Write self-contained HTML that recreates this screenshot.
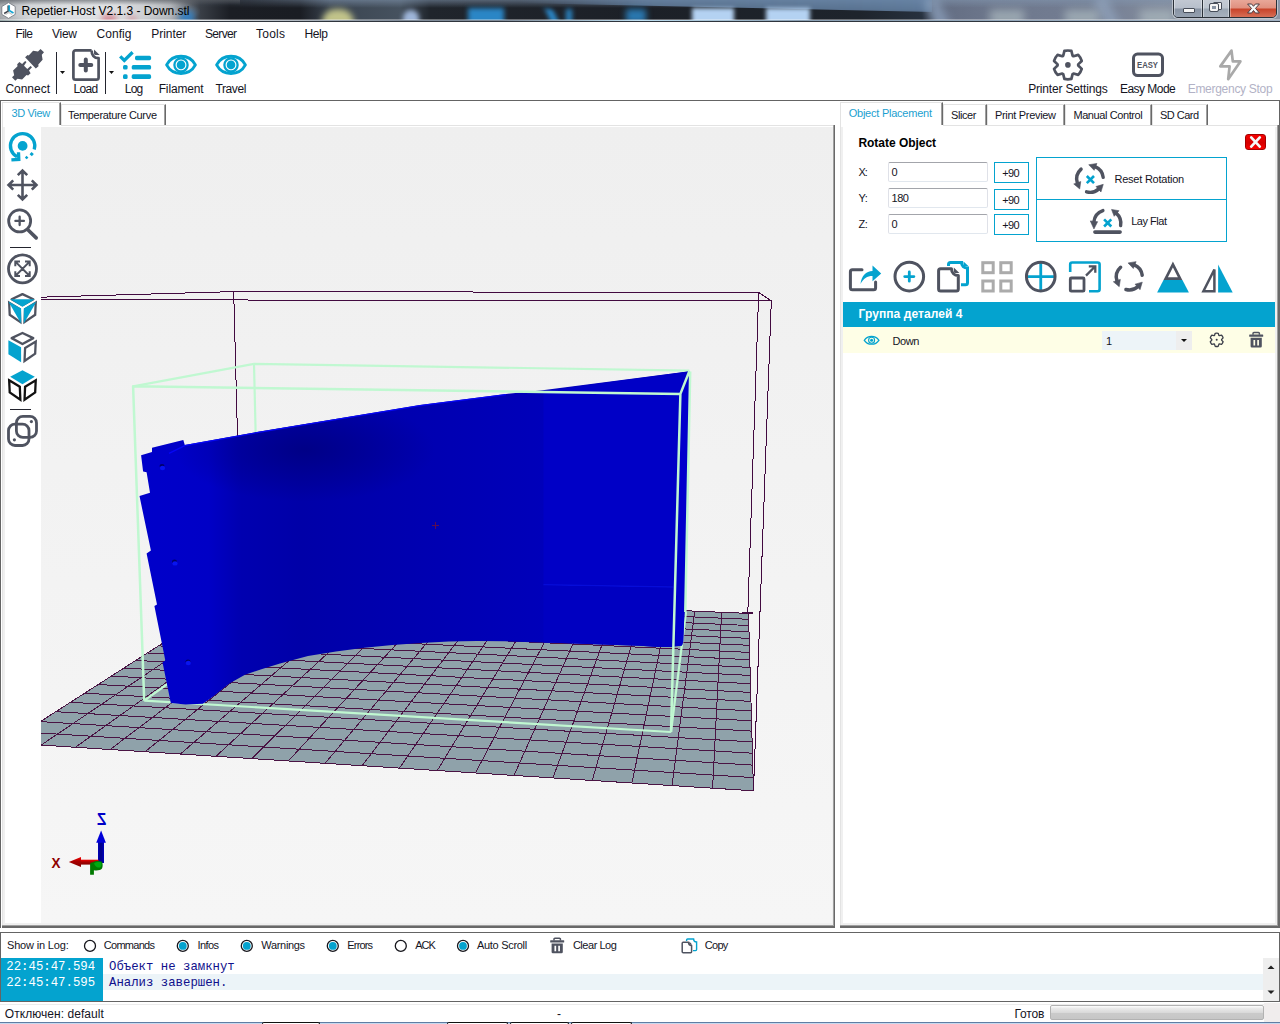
<!DOCTYPE html>
<html>
<head>
<meta charset="utf-8">
<title>Repetier-Host V2.1.3 - Down.stl</title>
<style>
html,body{margin:0;padding:0;}
body{width:1280px;height:1024px;overflow:hidden;background:#fff;position:relative;font-family:"Liberation Sans",sans-serif;font-size:12px;color:#000;}
.abs{position:absolute;}
.t{position:absolute;white-space:nowrap;line-height:14px;}
.ui{font-family:"Liberation Sans",sans-serif;font-size:12px;}
.ms{font-family:"Liberation Sans",sans-serif;font-size:11px;}
.mono{font-family:"Liberation Mono",monospace;font-size:12px;}
#title{left:0;top:0;width:1280px;height:22px;background:#222;}
.hl{position:absolute;height:1px;}
.vl{position:absolute;width:1px;}
svg{position:absolute;overflow:visible;}
.tab{position:absolute;top:104px;height:21px;box-sizing:border-box;border-top:1px solid #e3e3e3;border-left:1px solid #e3e3e3;border-right:1px solid #696969;box-shadow:inset -1px 0 0 #a0a0a0,inset 1px 1px 0 #fff;background:#fff;}
.tabsel{position:absolute;top:102px;height:23px;box-sizing:border-box;border-top:1px solid #e3e3e3;border-left:1px solid #e3e3e3;border-right:1px solid #696969;box-shadow:inset -1px 0 0 #a0a0a0;background:#fff;}
.page{position:absolute;box-sizing:border-box;border-left:1px solid #e3e3e3;border-top:1px solid #e3e3e3;border-right:1px solid #696969;border-bottom:1px solid #696969;box-shadow:inset -1px -1px 0 #a0a0a0, inset 0 0 0 3px #f0f0f0;background:#fff;}
</style>
</head>
<body>
<!-- TITLE BAR -->
<div id="title" class="abs"></div>
<div class="abs" style="left:0;top:0;width:1280px;height:21px;overflow:hidden;background:linear-gradient(90deg,#8e9297 0,#b9bdc2 30px,#c6c9cd 110px,#9fa3a9 170px,#3a3f47 200px,#1b1e24 230px,#1a1d23 300px,#3a4450 330px,#46525f 400px,#20252c 430px,#1c2027 640px,#1e242c 860px,#27313e 922px,#636d82 938px,#6e788d 1000px,#747e93 1100px,#838c9d 1160px,#8d96a6 1280px);">
  <div class="abs" style="left:-10px;top:-6px;width:210px;height:32px;background:radial-gradient(ellipse at 45% 55%,rgba(255,255,255,.55) 0,rgba(255,255,255,.35) 45%,rgba(255,255,255,0) 72%);"></div>
  <div class="abs" style="left:0;top:0;width:1280px;height:8px;background:linear-gradient(180deg,rgba(130,150,175,.55),rgba(130,150,175,0));-webkit-mask-image:linear-gradient(90deg,transparent 180px,#000 330px);mask-image:linear-gradient(90deg,transparent 180px,#000 330px);"></div><div class="abs" style="left:0;top:0;width:240px;height:5px;background:linear-gradient(180deg,rgba(90,94,100,.6),rgba(90,94,100,0));"></div>
  <div class="abs" style="left:520px;top:-6px;width:412px;height:20px;background:linear-gradient(90deg,rgba(105,135,170,0),rgba(105,135,170,.75) 30%,rgba(105,135,170,.85) 100%);clip-path:polygon(0 0,100% 0,100% 90%,0 45%);filter:blur(2.5px);"></div>
  <div class="abs" style="left:102px;top:15px;width:14px;height:8px;background:#d06a78;filter:blur(3px);opacity:.8;"></div>
  <div class="abs" style="left:128px;top:16px;width:8px;height:6px;background:#d06a78;filter:blur(3px);opacity:.6;"></div>
  <div class="abs" style="left:180px;top:11px;width:14px;height:12px;background:#2d80c8;filter:blur(3px);opacity:.9;"></div>
  <div class="abs" style="left:322px;top:9px;width:32px;height:16px;border-radius:14px 14px 0 0;background:#c2c48a;filter:blur(3px);"></div>
  <div class="abs" style="left:403px;top:10px;width:16px;height:14px;border-radius:8px 8px 0 0;background:#9fb6da;filter:blur(2.5px);"></div>
  <div class="abs" style="left:468px;top:8px;width:36px;height:16px;background:#2a86c6;filter:blur(2.5px);"></div>
  <div class="abs" style="left:548px;top:9px;width:8px;height:14px;background:#2a86c6;filter:blur(2.5px);transform:skewX(25deg);"></div>
  <div class="abs" style="left:566px;top:9px;width:6px;height:14px;background:#2a86c6;filter:blur(2.5px);"></div>
  <div class="abs" style="left:626px;top:9px;width:20px;height:14px;background:#2a78b0;filter:blur(3px);"></div>
  <div class="abs" style="left:692px;top:8px;width:42px;height:16px;background:#b4d2f2;filter:blur(2px);"></div>
  <div class="abs" style="left:766px;top:8px;width:44px;height:16px;background:#b4d2f2;filter:blur(2px);"></div>
  <div class="abs" style="left:930px;top:-4px;width:14px;height:34px;background:#8ea3bf;filter:blur(4px);transform:rotate(-28deg);opacity:.7;"></div>
  <div class="abs" style="left:1100px;top:-4px;width:14px;height:34px;background:#93a6bf;filter:blur(4px);transform:rotate(-28deg);opacity:.7;"></div>
  <div class="abs" style="left:990px;top:10px;width:34px;height:14px;background:#a9b7bd;filter:blur(4px);opacity:.75;"></div>
  <div class="abs" style="left:1065px;top:10px;width:34px;height:14px;background:#a9b7bd;filter:blur(4px);opacity:.75;"></div>
  <div class="abs" style="left:1140px;top:10px;width:34px;height:14px;background:#a9b7bd;filter:blur(4px);opacity:.75;"></div>
  <div class="abs" style="left:0;top:19px;width:1280px;height:1px;background:rgba(255,255,255,.35);"></div>
  <div class="abs" style="left:0;top:20px;width:1280px;height:1px;background:linear-gradient(90deg,#9aa 0,#dfe3e6 40px,#dfe3e6 200px,#7f8b99 400px,#7f8b99 500px,#bfe0f2 640px,#8aa0b4 800px,#9fb0c2 1280px);"></div>
  <!-- window buttons -->
  <div class="abs" style="left:1173px;top:-2px;width:104px;height:20px;border:1px solid #2a3038;border-radius:0 0 5px 5px;box-sizing:border-box;box-shadow:0 0 0 1px rgba(255,255,255,.45);overflow:hidden;">
    <div class="abs" style="left:0;top:0;width:28px;height:19px;background:linear-gradient(180deg,#c3c9d3 0,#b7bfcb 9px,#8893a3 10px,#97a2b1 19px);box-shadow:inset 0 0 0 1px rgba(255,255,255,.4);"></div>
    <div class="abs" style="left:28px;top:0;width:1px;height:19px;background:#2a3038;"></div>
    <div class="abs" style="left:29px;top:0;width:26px;height:19px;background:linear-gradient(180deg,#c6ccd5 0,#bcc4ce 9px,#9aa5b2 10px,#a9b3bf 19px);box-shadow:inset 0 0 0 1px rgba(255,255,255,.4);"></div>
    <div class="abs" style="left:55px;top:0;width:1px;height:19px;background:#2a3038;"></div>
    <div class="abs" style="left:56px;top:0;width:47px;height:19px;background:linear-gradient(180deg,#e9aa9c 0,#e0907f 9px,#c8432a 10px,#d9735a 19px);box-shadow:inset 0 0 0 1px rgba(255,255,255,.35);"></div>
    <div class="abs" style="left:9px;top:9px;width:10px;height:3px;background:#f4f4f4;border:1px solid #474d59;border-radius:1px;"></div>
    <div class="abs" style="left:39px;top:3px;width:7px;height:6px;background:#f4f4f4;border:1px solid #474d59;border-radius:1px;"></div>
    <div class="abs" style="left:36px;top:5px;width:4px;height:3px;background:#8893a3;border:2px solid #f4f4f4;outline:1px solid #474d59;border-radius:1px;"></div>
    <svg style="left:73px;top:4px" width="13" height="11" viewBox="0 0 13 11"><path d="M0.600 1h4l1.900 2.300L8.400 1h4L8.500 5.400 12.400 10h-4L6.500 7.500 4.600 10h-4l3.900-4.600z" fill="#f7f7f7" stroke="#4a3a40" stroke-width="1" stroke-linejoin="round"/></svg>
  </div>
  <!-- app icon -->
  <svg style="left:1px;top:2px" width="15" height="17" viewBox="0 0 15 17"><path d="M7.5 0.6L14.2 4.5V12.4L7.5 16.4L0.8 12.4V4.5z" fill="#fff" stroke="#6a6f77" stroke-width="0.8"/><path d="M7.2 3.5v5.6l-4 2.4" stroke="#3f434d" stroke-width="1.6" fill="none"/><path d="M8.2 3.2v5.2l4.3 2.6" stroke="#16a5d2" stroke-width="1.7" fill="none"/><path d="M4.5 12.5l3.3-2 3.3 2" stroke="#c8c8c8" stroke-width="1.3" fill="none"/></svg>
  <span class="t" style="left:21.5px;top:4px;letter-spacing:-0.024px;font-family:'Liberation Sans',sans-serif;font-size:12px;">Repetier-Host V2.1.3 - Down.stl</span>
</div>
<div class="abs" style="left:0;top:21px;width:1280px;height:1px;background:#2f353d;"></div>


<!-- MENU -->
<span class="t" style="left:15.5px;top:27px;letter-spacing:-0.615px;font-family:'Liberation Sans',sans-serif;font-size:12px;color:#14141e;">File</span>
<span class="t" style="left:52px;top:27px;letter-spacing:-0.266px;font-family:'Liberation Sans',sans-serif;font-size:12px;color:#14141e;">View</span>
<span class="t" style="left:96.5px;top:27px;letter-spacing:0.062px;font-family:'Liberation Sans',sans-serif;font-size:12px;color:#14141e;">Config</span>
<span class="t" style="left:151.3px;top:27px;letter-spacing:-0.057px;font-family:'Liberation Sans',sans-serif;font-size:12px;color:#14141e;">Printer</span>
<span class="t" style="left:205px;top:27px;letter-spacing:-0.669px;font-family:'Liberation Sans',sans-serif;font-size:12px;color:#14141e;">Server</span>
<span class="t" style="left:256px;top:27px;letter-spacing:0.246px;font-family:'Liberation Sans',sans-serif;font-size:12px;color:#14141e;">Tools</span>
<span class="t" style="left:304.4px;top:27px;letter-spacing:-0.396px;font-family:'Liberation Sans',sans-serif;font-size:12px;color:#14141e;">Help</span>


<!-- TOOLBAR -->
<!-- connect -->
<svg style="left:12px;top:49px" width="32" height="32" viewBox="0 0 32 32"><g fill="#4f5360">
<path d="M13.1 8.2L15.6 6L16.7 6.6L21.1 1.7L26 2.5L28.5 0L32 3.3L29.8 5.7L30.6 10.7L26.3 15.6L26.5 17.2L23.8 19.4Z"/>
<path d="M5.2 15.3L7.4 13.1L10.1 15L13.1 12L14.5 13.1L12 16.7L15.3 20L18.6 17L20 18.3L17 21.6L18.6 24.3L16.1 26.5L14.5 26L10.1 30.6L5.5 29.8L3.3 31.7L0 28.2L2.2 26.3L1.1 21.6L5.5 17.2Z"/>
</g></svg>
<span class="t" style="left:5.4px;top:82px;letter-spacing:-0.017px;font-family:'Liberation Sans',sans-serif;font-size:12px;color:#14141e;">Connect</span>
<div class="abs" style="left:56px;top:52px;width:1px;height:42px;background:#23242e;"></div>
<svg style="left:60px;top:71px" width="5" height="3" viewBox="0 0 5 3"><path d="M0 0h5L2.5 3z" fill="#111"/></svg>
<!-- load -->
<svg style="left:72px;top:49px" width="28" height="32" viewBox="0 0 28 32"><g fill="none" stroke="#4f5360" stroke-width="2.7" stroke-linejoin="round">
<path d="M19.6 1.4H3.6A2.2 2.2 0 0 0 1.4 3.6V28.4A2.2 2.2 0 0 0 3.6 30.6H24.4A2.2 2.2 0 0 0 26.6 28.4V9.2C22 9.2 19.6 6 19.6 1.4"/>
</g><path d="M22 0.5L27.7 6H23.6A1.6 1.6 0 0 1 22 4.4z" fill="#4f5360"/>
<path d="M13.8 10.6V21.6M8.3 16.1H19.3" stroke="#4f5360" stroke-width="4" stroke-linecap="round" fill="none"/></svg>
<span class="t" style="left:73.6px;top:82px;letter-spacing:-0.701px;font-family:'Liberation Sans',sans-serif;font-size:12px;color:#14141e;">Load</span>
<div class="abs" style="left:105px;top:52px;width:1px;height:42px;background:#23242e;"></div>
<svg style="left:109px;top:71px" width="5" height="3" viewBox="0 0 5 3"><path d="M0 0h5L2.5 3z" fill="#111"/></svg>
<!-- log -->
<svg style="left:0;top:0" width="1280" height="100" viewBox="0 0 1280 100"><g fill="#04a3cf">
<path d="M120.2 56.4L124.3 60.4L132.6 52.3" fill="none" stroke="#04a3cf" stroke-width="3.3"/>
<rect x="135" y="55.8" width="16.1" height="4.4" rx="1.6"/>
<rect x="123" y="65.1" width="4.6" height="4.5" rx="1.5"/><rect x="131.7" y="65.1" width="19.4" height="4.5" rx="1.6"/>
<rect x="123" y="74.3" width="4.6" height="4.6" rx="1.5"/><rect x="131.7" y="74.3" width="19.4" height="4.6" rx="1.6"/>
</g>
<!-- eyes -->
<g id="eye" fill="none" stroke="#04a3cf"><path d="M166.6 64.9C170 58.5 175.5 56.3 181 56.3C186.500 56.3 192 58.5 195.4 64.9C192 71.300 186.500 73.500 181 73.500C175.500 73.500 170 71.300 166.600 64.900Z" stroke-width="2.9" stroke-linejoin="round"/><circle cx="181" cy="64.9" r="6.6" stroke-width="2.3"/><circle cx="181" cy="64.9" r="4.3" fill="#04a3cf" stroke="none"/></g>
<use href="#eye" x="50"/>
<!-- gear -->
<path d="M1072.58 55.72L1071.38 50.93A14.4 14.4 0 0 0 1064.42 50.93L1063.22 55.72A10.3 10.3 0 0 0 1062.29 56.26L1057.54 54.90A14.4 14.4 0 0 0 1054.06 60.93L1057.61 64.36A10.3 10.3 0 0 0 1057.61 65.44L1054.06 68.87A14.4 14.4 0 0 0 1057.54 74.90L1062.29 73.54A10.3 10.3 0 0 0 1063.22 74.08L1064.42 78.87A14.4 14.4 0 0 0 1071.38 78.87L1072.58 74.08A10.3 10.3 0 0 0 1073.51 73.54L1078.26 74.90A14.4 14.4 0 0 0 1081.74 68.87L1078.19 65.44A10.3 10.3 0 0 0 1078.19 64.36L1081.74 60.93A14.4 14.4 0 0 0 1078.26 54.90L1073.51 56.26A10.3 10.3 0 0 0 1072.58 55.72Z" fill="none" stroke="#4f5360" stroke-width="2.7" stroke-linejoin="round"/><circle cx="1067.9" cy="64.9" r="2.8" fill="#4f5360"/>
<!-- easy -->
<rect x="1133.5" y="54.1" width="29" height="21.4" rx="4" fill="none" stroke="#4f5360" stroke-width="3"/>
<text x="1137" y="67.7" font-family="Liberation Sans, sans-serif" font-size="8.6" font-weight="bold" fill="#4f5360" textLength="21" lengthAdjust="spacingAndGlyphs">EASY</text>
<!-- bolt -->
<path d="M1231.5 50.6L1220.3 66.4H1229.6L1228.2 79.2L1240.4 61.4H1232.8Z" fill="none" stroke="#a9a9a9" stroke-width="2.7" stroke-linejoin="round"/>
</svg>
<span class="t" style="left:124.7px;top:82px;letter-spacing:-0.716px;font-family:'Liberation Sans',sans-serif;font-size:12px;color:#14141e;">Log</span>
<span class="t" style="left:158.7px;top:82px;letter-spacing:-0.145px;font-family:'Liberation Sans',sans-serif;font-size:12px;color:#14141e;">Filament</span>
<span class="t" style="left:215.4px;top:82px;letter-spacing:-0.381px;font-family:'Liberation Sans',sans-serif;font-size:12px;color:#14141e;">Travel</span>
<span class="t" style="left:1028.2px;top:82px;letter-spacing:-0.170px;font-family:'Liberation Sans',sans-serif;font-size:12px;color:#14141e;">Printer Settings</span>
<span class="t" style="left:1120px;top:82px;letter-spacing:-0.541px;font-family:'Liberation Sans',sans-serif;font-size:12px;color:#14141e;">Easy Mode</span>
<span class="t" style="left:1187.7px;top:82px;letter-spacing:-0.286px;font-family:'Liberation Sans',sans-serif;font-size:12px;color:#b2b2c6;">Emergency Stop</span>


<!-- FRAMES -->
<div class="abs" style="left:0;top:100px;width:1280px;height:1px;background:#646464;"></div>
<div class="abs" style="left:0;top:100px;width:1px;height:828px;background:#646464;"></div>
<div class="abs" style="left:1279px;top:100px;width:1px;height:26px;background:#646464;"></div>
<!-- left tab control -->
<div class="abs" style="left:2px;top:125px;width:833px;height:803px;background:#696969;"></div>
<div class="abs" style="left:2px;top:125px;width:832px;height:801px;background:#a0a0a0;"></div>
<div class="abs" style="left:2px;top:125px;width:831px;height:800px;background:#e3e3e3;"></div>
<div class="abs" style="left:3px;top:126px;width:830px;height:799px;background:#f0f0f0;"></div>
<div class="abs" style="left:3px;top:125px;width:830px;height:2px;background:#fff;"></div><div class="abs" style="left:61px;top:125px;width:772px;height:1px;background:#e3e3e3;"></div>
<div class="abs" style="left:5px;top:127px;width:36px;height:796px;background:#fff;"></div>
<div class="tab" style="left:61px;width:105px;"></div>
<div class="tabsel" style="left:2px;width:59px;"></div><div class="abs" style="left:3px;top:125px;width:57px;height:2px;background:#fff;"></div>
<span class="t" style="left:11.5px;top:106px;letter-spacing:-0.361px;font-family:'Liberation Sans',sans-serif;font-size:11px;color:#1b9fd0;">3D View</span>
<span class="t" style="left:68px;top:108px;letter-spacing:-0.322px;font-family:'Liberation Sans',sans-serif;font-size:11px;color:#14141e;">Temperature Curve</span>
<!-- right tab control -->
<div class="abs" style="left:840px;top:125px;width:440px;height:803px;background:#696969;"></div>
<div class="abs" style="left:840px;top:125px;width:438px;height:801px;background:#a0a0a0;"></div>
<div class="abs" style="left:840px;top:125px;width:437px;height:800px;background:#e3e3e3;"></div>
<div class="abs" style="left:841px;top:126px;width:436px;height:799px;background:#f0f0f0;"></div>
<div class="abs" style="left:841px;top:125px;width:436px;height:2px;background:#fff;"></div><div class="abs" style="left:943px;top:125px;width:334px;height:1px;background:#e3e3e3;"></div>
<div class="abs" style="left:843px;top:127px;width:432px;height:796px;background:#fff;"></div>
<div class="tab" style="left:943px;width:44px;"></div>
<div class="tab" style="left:987px;width:78px;"></div>
<div class="tab" style="left:1065px;width:87px;"></div>
<div class="tab" style="left:1152px;width:56px;"></div>
<div class="tabsel" style="left:840px;width:103px;"></div><div class="abs" style="left:841px;top:125px;width:101px;height:2px;background:#fff;"></div>
<span class="t" style="left:848.7px;top:106px;letter-spacing:-0.235px;font-family:'Liberation Sans',sans-serif;font-size:11px;color:#1b9fd0;">Object Placement</span>
<span class="t" style="left:951px;top:108px;letter-spacing:-0.423px;font-family:'Liberation Sans',sans-serif;font-size:11px;color:#14141e;">Slicer</span>
<span class="t" style="left:995px;top:108px;letter-spacing:-0.316px;font-family:'Liberation Sans',sans-serif;font-size:11px;color:#14141e;">Print Preview</span>
<span class="t" style="left:1073.4px;top:108px;letter-spacing:-0.400px;font-family:'Liberation Sans',sans-serif;font-size:11px;color:#14141e;">Manual Control</span>
<span class="t" style="left:1160px;top:108px;letter-spacing:-0.531px;font-family:'Liberation Sans',sans-serif;font-size:11px;color:#14141e;">SD Card</span>


<!-- LEFT TOOLS -->
<svg style="left:0;top:0" width="45" height="460" viewBox="0 0 45 460">
<g fill="none" stroke="#04a3cf" stroke-width="3.3"><path d="M34.20 149.57A12.2 12.2 0 1 0 17.06 156.67"/><path d="M18.5 152.2L18.8 159.4L11.4 159.8" stroke-linejoin="miter"/></g>
<circle cx="22.6" cy="145.9" r="4.9" fill="#04a3cf"/>
<rect x="30.2" y="152.6" width="3" height="3" fill="#04a3cf" transform="rotate(40 31.7 154.1)"/><rect x="25.4" y="156.4" width="2.5" height="2.5" fill="#04a3cf" transform="rotate(40 26.7 157.6)"/>
<g fill="none" stroke="#4f5360" stroke-width="2.6" stroke-linejoin="miter">
<path d="M22.5 170.5V199.5M8.5 185H36.500M17.800 175.200L22.500 170.500L27.200 175.200M17.800 194.800L22.500 199.500L27.200 194.800M13.200 180.300L8.500 185L13.200 189.700M31.800 180.300L36.500 185L31.800 189.700"/>
</g>
<g fill="none" stroke="#4f5360">
<circle cx="19.65" cy="220.9" r="11" stroke-width="2.8"/><path d="M15.4 220.900H23.900M19.650 216.700V225.100" stroke-width="2.3" stroke-linecap="round"/><path d="M27.600 229.500L36.200 237.900" stroke-width="3.600" stroke-linecap="round"/>
<circle cx="22.500" cy="268.800" r="14" stroke-width="2.800"/>
<path d="M15.600 261.900L29.400 275.700M29.400 261.900L15.600 275.700M15.300 266.300V261.600H20M25 261.600H29.700V266.300M29.700 271.300V276H25M20 276H15.300V271.300" stroke-width="2"/>
</g>
<rect x="10" y="247" width="21" height="1" fill="#23242e"/>
<rect x="10" y="409" width="21" height="1" fill="#23242e"/>
<polygon points="22.46,294.09 33.31,299.23 22.46,305.21 11.64,299.23" fill="none" stroke="#4f5360" stroke-width="2.3" stroke-linejoin="round"/><polygon points="10.15,299.20 34.80,299.20 22.46,306.70" fill="#04a3cf"/><polygon points="9.16,302.69 19.81,309.16 20.36,322.10 9.73,314.76" fill="none" stroke="#4f5360" stroke-width="2.3"/><polygon points="25.09,309.16 35.74,302.69 35.17,314.76 24.54,322.10" fill="none" stroke="#4f5360" stroke-width="2.3"/><polygon points="8.40,301.40 21.10,308.40 21.10,323.40" fill="#04a3cf"/><polygon points="23.80,308.40 36.50,301.40 23.80,323.40" fill="#04a3cf"/><polygon points="22.46,332.99 33.31,338.13 22.46,344.11 11.64,338.13" fill="none" stroke="#4f5360" stroke-width="2.3" stroke-linejoin="round"/><polygon points="8.40,340.30 21.10,347.30 21.10,362.30 8.40,354.35" fill="#04a3cf"/><polygon points="25.09,348.06 35.74,341.59 35.17,353.66 24.54,361.00" fill="none" stroke="#4f5360" stroke-width="2.3"/><polygon points="22.46,370.20 34.80,376.80 22.46,384.30 10.15,376.80" fill="#04a3cf"/><polygon points="9.16,380.29 19.81,386.76 20.36,399.70 9.73,392.36" fill="none" stroke="#111" stroke-width="2.3"/><polygon points="25.09,386.76 35.74,380.29 35.17,392.36 24.54,399.70" fill="none" stroke="#111" stroke-width="2.3"/>
<g fill="none" stroke="#4f5360" stroke-width="2.8"><rect x="16.400" y="416.400" width="20.100" height="21" rx="6.500"/><rect x="8.500" y="424.100" width="20.500" height="21.400" rx="6.500"/></g>
<circle cx="31.400" cy="421.600" r="1.600" fill="#4f5360"/><circle cx="14.400" cy="439.800" r="1.600" fill="#4f5360"/>
</svg>


<!-- 3D VIEW -->
<svg class="abs" style="left:41px;top:127px;" width="791" height="796" viewBox="41 127 791 796">
<defs>
<linearGradient id="bgv" x1="0" y1="0" x2="0" y2="1"><stop offset="0" stop-color="#efefef"/><stop offset="1" stop-color="#f6f6f6"/></linearGradient>
<linearGradient id="objg" gradientUnits="userSpaceOnUse" x1="140" y1="0" x2="545" y2="0">
<stop offset="0" stop-color="#0000ca"/><stop offset="0.17" stop-color="#0000c6"/><stop offset="0.25" stop-color="#0000b0"/><stop offset="0.4" stop-color="#0000a8"/><stop offset="0.6" stop-color="#0000ae"/><stop offset="0.8" stop-color="#0000b4"/><stop offset="1" stop-color="#0000ba"/></linearGradient>
<radialGradient id="objd" gradientUnits="userSpaceOnUse" cx="305" cy="450" r="130" gradientTransform="translate(305 450) scale(1 0.4) translate(-305 -450)"><stop offset="0" stop-color="#000070" stop-opacity="0.6"/><stop offset="1" stop-color="#000070" stop-opacity="0"/></radialGradient>
<clipPath id="objc"><polygon points="141.1,455.2 152.0,452.0 152.0,447.8 183.3,440.0 184.8,445.0 260.0,431.5 340.0,418.2 420.0,405.0 506.0,394.0 540.6,390.4 689.6,371.2 690.4,373.5 686.7,536.0 684.6,609.0 683.2,641.5 682.0,645.6 671.5,647.0 658.7,647.0 640.0,645.8 617.5,645.0 589.0,644.0 561.0,643.0 533.0,642.2 505.0,641.3 476.9,641.0 448.7,641.6 420.6,643.0 392.5,645.0 364.4,647.8 336.0,651.5 308.0,656.0 280.0,663.6 260.6,669.4 245.0,674.8 229.4,683.4 213.8,696.0 202.8,703.8 185.6,704.5 170.8,703.0 162.5,662.3 165.3,660.5 154.4,606.0 157.0,604.5 146.6,553.6 150.9,550.5 139.5,496.1 150.0,492.7 146.6,472.3 143.1,471.6"/></clipPath>
<clipPath id="vclip"><rect x="41" y="127" width="791" height="796"/></clipPath>
</defs>
<rect x="41" y="127" width="791" height="796" fill="url(#bgv)"/>
<g clip-path="url(#vclip)">
<!-- printer volume back lines -->
<g stroke="#420a40" stroke-width="1" fill="none" shape-rendering="crispEdges">
<path d="M233.7 291.6L237.6 440M233.7 291.6L758.7 292.5M233.7 291.6L30 297.5M758.7 292.5L747.8 613"/>
</g>
<!-- bbox back lines -->
<g stroke="#c0f8d1" stroke-width="2.2" fill="none">
<path d="M254 363.8L255.8 440M254 363.8L689.4 370.6M133.1 386.3L254 363.8"/>
</g>
<!-- bed -->
<polygon points="7.1,742.9 753.5,790.8 748.5,613.4 242.4,592.1" fill="#8fa2aa"/>
<path d="M7.1 742.9L242.4 592.1M7.1 742.9L753.5 790.8M41.1 745.1L266.2 593.1M24.0 732.0L753.1 777.6M75.4 747.3L290.1 594.1M40.2 721.6L752.8 765.1M110.1 749.5L314.2 595.1M55.7 711.7L752.4 753.2M145.1 751.7L338.5 596.1M70.5 702.3L752.1 741.9M180.4 754.0L362.9 597.1M84.6 693.2L751.8 731.1M216.0 756.3L387.4 598.2M98.2 684.5L751.5 720.8M252.0 758.6L412.1 599.2M111.2 676.1L751.2 710.9M288.4 760.9L437.0 600.3M123.7 668.1L751.0 701.4M325.1 763.3L462.0 601.3M135.7 660.4L750.7 692.4M362.1 765.7L487.2 602.4M147.3 653.0L750.5 683.7M399.5 768.1L512.6 603.5M158.4 645.9L750.2 675.4M437.3 770.5L538.1 604.5M169.1 639.0L750.0 667.4M475.5 772.9L563.8 605.6M179.5 632.4L749.8 659.7M514.0 775.4L589.7 606.7M189.4 626.0L749.6 652.4M552.9 777.9L615.7 607.8M199.0 619.9L749.4 645.3M592.2 780.4L641.9 608.9M208.3 613.9L749.2 638.4M631.9 783.0L668.3 610.0M217.3 608.2L749.0 631.8M672.0 785.6L694.8 611.1M225.9 602.6L748.8 625.5M712.6 788.2L721.6 612.3M234.3 597.3L748.7 619.3M753.5 790.8L748.5 613.4M242.4 592.1L748.5 613.4" stroke="#4a1444" stroke-width="1" fill="none" shape-rendering="crispEdges"/>
<path d="M686 612L671 732M144.2 700.6L180 675M144.2 700.6L671 732" stroke="#c0f8d1" stroke-width="2.2" fill="none"/>
<!-- object -->
<polygon points="141.1,455.2 152.0,452.0 152.0,447.8 183.3,440.0 184.8,445.0 260.0,431.5 340.0,418.2 420.0,405.0 506.0,394.0 540.6,390.4 689.6,371.2 690.4,373.5 686.7,536.0 684.6,609.0 683.2,641.5 682.0,645.6 671.5,647.0 658.7,647.0 640.0,645.8 617.5,645.0 589.0,644.0 561.0,643.0 533.0,642.2 505.0,641.3 476.9,641.0 448.7,641.6 420.6,643.0 392.5,645.0 364.4,647.8 336.0,651.5 308.0,656.0 280.0,663.6 260.6,669.4 245.0,674.8 229.4,683.4 213.8,696.0 202.8,703.8 185.6,704.5 170.8,703.0 162.5,662.3 165.3,660.5 154.4,606.0 157.0,604.5 146.6,553.6 150.9,550.5 139.5,496.1 150.0,492.7 146.6,472.3 143.1,471.6" fill="url(#objg)"/>
<g clip-path="url(#objc)">
<rect x="140" y="360" width="560" height="350" fill="url(#objd)"/>
<polygon points="543.5,391 690,371 692,374 690,500 687,600 686,586 543.5,584" fill="#0000c6"/>
<polygon points="543.5,584 686,586.5 686,588 543.5,585.5" fill="#0a14ee" opacity="0.6"/>
<polygon points="680.4,393.9 689.5,371.5 692,374 690,500 687,600 685,646 676,646 672.8,600" fill="#0000cc"/>
<polygon points="543.5,585.5 673.4,588 672,650 543.5,650" fill="#0000c1"/>
</g>
<path d="M169 453.4L184.8 445.600L260 432.100L340 418.800L420 405.600L506 394.600" stroke="#0606f6" stroke-width="1.3" fill="none"/>
<!-- holes -->
<g fill="#00006a"><ellipse cx="162" cy="466" rx="2.5" ry="2"/><ellipse cx="174.5" cy="561.5" rx="2.5" ry="2"/><ellipse cx="188" cy="661.5" rx="2.5" ry="2"/></g>
<g fill="#0814f0"><ellipse cx="162.5" cy="468" rx="2.6" ry="2.2"/><ellipse cx="175" cy="563.4" rx="2.6" ry="2.2"/><ellipse cx="188.3" cy="663" rx="2.6" ry="2.2"/></g>
<!-- bbox front lines -->
<g stroke="#c0f8d1" stroke-width="2.5" fill="none" stroke-linejoin="round">
<path d="M144.2 700.6L133.1 386.3L680.4 393.9L671 732M680.4 393.9L689.4 371M690.200 371.500L685.300 612"/>
</g>
<!-- printer volume front lines -->
<g stroke="#420a40" stroke-width="1" fill="none" shape-rendering="crispEdges">
<path d="M30 299.6L771.3 301L753.5 790.8M758.7 292.5L771.3 301"/>
<path d="M741.5 612.8H752.5" stroke-width="2"/>
<path d="M432 525H439M435.5 521.500V528.500" stroke="#5c0c50"/>
</g>
<!-- axis gizmo -->
<g>
<linearGradient id="zb" x1="0" x2="1"><stop offset="0" stop-color="#0000b8"/><stop offset=".5" stop-color="#000086"/><stop offset="1" stop-color="#0000c0"/></linearGradient>
<linearGradient id="xr" x1="0" x2="0" y1="0" y2="1"><stop offset="0" stop-color="#f40000"/><stop offset=".45" stop-color="#a80000"/><stop offset="1" stop-color="#860000"/></linearGradient>
<rect x="98" y="842" width="6" height="21" fill="url(#zb)"/><polygon points="101.100,830.500 96.200,842.800 105.900,842.800" fill="#0000d8"/>
<rect x="80.500" y="859.700" width="18" height="4.900" fill="url(#xr)"/><polygon points="68.800,862.100 81,857 81,867" fill="url(#xr)"/>
<path d="M90.100 874.700V864.500C90.100 863 91.500 862.200 93 862.300C94.500 860.800 99 860.600 101.500 861.500C103 862.500 103 866.500 102 868.500C100.500 870.500 97 870.700 93.900 870.300V874.700Z" fill="#007a00"/>
<path d="M94 863.500C96 862 99.500 861.700 101 862.500C102 864 101.500 866.500 100 867.500C98 868 95.500 867 94 863.500Z" fill="#00aa10"/>
<text x="51.400" y="868" font-family="Liberation Sans, sans-serif" font-size="15.300" font-weight="bold" fill="#8e0000" textLength="9" lengthAdjust="spacingAndGlyphs">X</text>
<text x="-106.200" y="824.600" font-family="Liberation Sans, sans-serif" font-size="16" font-weight="bold" fill="#0000c8" transform="scale(-1 1)" textLength="9.200" lengthAdjust="spacingAndGlyphs">Z</text>
</g>
</g>
</svg>


<!-- RIGHT PANEL -->

<span class="t" style="left:858.4px;top:136px;letter-spacing:-0.026px;font-family:'Liberation Sans',sans-serif;font-size:12px;font-weight:bold;">Rotate Object</span>
<div class="abs" style="left:1245px;top:134px;width:21px;height:16px;box-sizing:border-box;border:1px solid #a30000;border-radius:3px;background:linear-gradient(180deg,#f60000 0,#d40000 55%,#fb0000 100%);"></div>
<svg style="left:1245px;top:134px" width="21" height="16" viewBox="0 0 21 16"><path d="M6.2 3.4L14.800 12.600M14.800 3.400L6.200 12.600" stroke="#f4f8f8" stroke-width="2.700" stroke-linecap="round"/></svg>
<span class="t" style="left:858.4px;top:165px;letter-spacing:-1.006px;font-family:'Liberation Sans',sans-serif;font-size:11px;color:#14141e;">X:</span>
<span class="t" style="left:858.4px;top:191px;letter-spacing:-0.397px;font-family:'Liberation Sans',sans-serif;font-size:11px;color:#14141e;">Y:</span>
<span class="t" style="left:858.4px;top:217px;letter-spacing:-0.381px;font-family:'Liberation Sans',sans-serif;font-size:11px;color:#14141e;">Z:</span>
<div class="abs" style="left:888px;top:162px;width:100px;height:20px;box-sizing:border-box;border:1px solid #dfe1e8;border-top-color:#a3a5ab;border-bottom-color:#e1e7ee;border-radius:2px;background:#fff;"></div><div class="abs" style="left:888px;top:188px;width:100px;height:20px;box-sizing:border-box;border:1px solid #dfe1e8;border-top-color:#a3a5ab;border-bottom-color:#e1e7ee;border-radius:2px;background:#fff;"></div><div class="abs" style="left:888px;top:214px;width:100px;height:20px;box-sizing:border-box;border:1px solid #dfe1e8;border-top-color:#a3a5ab;border-bottom-color:#e1e7ee;border-radius:2px;background:#fff;"></div>
<span class="t" style="left:891.6px;top:165px;font-family:'Liberation Sans',sans-serif;font-size:11px;color:#14141e;">0</span>
<span class="t" style="left:891.6px;top:191px;letter-spacing:-0.580px;font-family:'Liberation Sans',sans-serif;font-size:11px;color:#14141e;">180</span>
<span class="t" style="left:891.6px;top:217px;font-family:'Liberation Sans',sans-serif;font-size:11px;color:#14141e;">0</span>
<div class="abs" style="left:994px;top:162px;width:35px;height:21px;box-sizing:border-box;border:1px solid #04a3cf;background:#fff;"></div><div class="abs" style="left:994px;top:189px;width:35px;height:21px;box-sizing:border-box;border:1px solid #04a3cf;background:#fff;"></div><div class="abs" style="left:994px;top:214px;width:35px;height:21px;box-sizing:border-box;border:1px solid #04a3cf;background:#fff;"></div>
<span class="t" style="left:1002.2px;top:166px;letter-spacing:-0.586px;font-family:'Liberation Sans',sans-serif;font-size:11px;color:#14141e;">+90</span>
<span class="t" style="left:1002.2px;top:193px;letter-spacing:-0.586px;font-family:'Liberation Sans',sans-serif;font-size:11px;color:#14141e;">+90</span>
<span class="t" style="left:1002.2px;top:218px;letter-spacing:-0.586px;font-family:'Liberation Sans',sans-serif;font-size:11px;color:#14141e;">+90</span>
<div class="abs" style="left:1036px;top:157px;width:191px;height:85px;box-sizing:border-box;border:1px solid #04a3cf;background:#fff;"></div>
<div class="abs" style="left:1036px;top:199px;width:191px;height:1px;background:#04a3cf;"></div>
<span class="t" style="left:1114.5px;top:172px;letter-spacing:-0.236px;font-family:'Liberation Sans',sans-serif;font-size:11px;color:#14141e;">Reset Rotation</span>
<span class="t" style="left:1131.2px;top:214px;letter-spacing:-0.477px;font-family:'Liberation Sans',sans-serif;font-size:11px;color:#14141e;">Lay Flat</span>
<svg style="left:0;top:0" width="1280" height="360" viewBox="0 0 1280 360">
<!-- reset rotation icon -->
<path d="M1103.20 177.38A13.3 13.3 0 0 0 1094.98 166.67" fill="none" stroke="#4f5360" stroke-width="3.4" stroke-linecap="round"/><polygon points="1088.75,164.75 1096.91,163.47 1094.13,170.34" fill="#4f5360" stroke="#4f5360" stroke-width="0.6" stroke-linejoin="round"/><path d="M1081.10 169.12A13.3 13.3 0 0 0 1077.42 183.33" fill="none" stroke="#4f5360" stroke-width="3.4" stroke-linecap="round"/><polygon points="1079.71,188.93 1073.74,183.97 1080.75,181.57" fill="#4f5360" stroke="#4f5360" stroke-width="0.6" stroke-linejoin="round"/><path d="M1086.56 191.85A13.3 13.3 0 0 0 1098.90 188.88" fill="none" stroke="#4f5360" stroke-width="3.4" stroke-linecap="round"/><polygon points="1103.26,184.36 1100.93,192.02 1095.98,186.51" fill="#4f5360" stroke="#4f5360" stroke-width="0.6" stroke-linejoin="round"/><path d="M1086.8000000000002 176.0L1094.0 183.2M1094.0 176.0L1086.8000000000002 183.2" stroke="#04a3cf" stroke-width="2.6" fill="none"/>
<!-- lay flat icon -->
<path d="M1102.90 210.54A13.5 13.5 0 0 0 1093.87 221.89" fill="none" stroke="#4f5360" stroke-width="3.4" stroke-linecap="round"/><polygon points="1093.95,228.97 1090.27,220.91 1097.63,221.68" fill="#4f5360" stroke="#4f5360" stroke-width="0.6" stroke-linejoin="round"/><path d="M1120.59 225.64A13.5 13.5 0 0 0 1116.16 213.11" fill="none" stroke="#4f5360" stroke-width="3.4" stroke-linecap="round"/><polygon points="1111.54,209.43 1119.03,210.72 1114.17,216.31" fill="#4f5360" stroke="#4f5360" stroke-width="0.6" stroke-linejoin="round"/><path d="M1104.1000000000001 219.3L1111.3 226.5M1111.3 219.3L1104.1000000000001 226.5" stroke="#04a3cf" stroke-width="2.6" fill="none"/>
<path d="M1094.9 232.1H1120.100" stroke="#4f5360" stroke-width="3.6" stroke-linecap="round"/>
<!-- object toolbar -->
<path d="M862 269.7H852.400A2 2 0 0 0 850.400 271.700V287.800A2 2 0 0 0 852.400 289.800H873.600A2 2 0 0 0 875.600 287.800V282" fill="none" stroke="#4f5360" stroke-width="3" stroke-linecap="round"/>
<path d="M860.5 284C861.500 275.500 866 271.500 872.500 271V265.600L881.200 273.400L872.500 281.200V276C867 276 863.500 278.500 860.500 284Z" fill="#04a3cf"/>
<circle cx="909.3" cy="276.600" r="14.300" fill="none" stroke="#4f5360" stroke-width="3"/><path d="M904.700 276.600H913.900M909.300 272V281.200" stroke="#04a3cf" stroke-width="2.800" stroke-linecap="round"/>
<path d="M956 262.500H950.500A2 2 0 0 0 948.500 264.500V266M961 284.800H965.500A2 2 0 0 0 967.500 282.800V268C964 268 961.500 266 961.500 262.500H956" fill="none" stroke="#04a3cf" stroke-width="3"/><path d="M963.500 261.400L968.600 266.200H964.700A1.200 1.200 0 0 1 963.500 265z" fill="#04a3cf"/>
<path d="M951.500 268.700H940.600A2 2 0 0 0 938.600 270.700V289.100A2 2 0 0 0 940.600 291.100H956.300A2 2 0 0 0 958.300 289.100V275.500C954.500 275.500 951.500 273 951.500 268.700Z" fill="#fff" stroke="#4f5360" stroke-width="3" stroke-linejoin="round"/><path d="M953.800 267.600L959.400 273H955.300A1.500 1.500 0 0 1 953.800 271.500z" fill="#4f5360"/>
<g fill="none" stroke="#ababab" stroke-width="3"><rect x="982.800" y="262.700" width="10.400" height="10"/><rect x="1000.800" y="262.700" width="10.400" height="10"/><rect x="982.800" y="281" width="10.400" height="10"/><rect x="1000.800" y="281" width="10.400" height="10"/></g>
<path d="M1040.750 262V291.200M1026.200 276.600H1055.300" stroke="#04a3cf" stroke-width="2.800"/><circle cx="1040.750" cy="276.600" r="14.300" fill="none" stroke="#4f5360" stroke-width="3"/>
<path d="M1070.200 272V264.500A2 2 0 0 1 1072.200 262.500H1097.600A2 2 0 0 1 1099.600 264.500V289.300A2 2 0 0 1 1097.600 291.300H1089" fill="none" stroke="#04a3cf" stroke-width="2.600"/>
<rect x="1070.300" y="278" width="13.700" height="13.200" rx="1" fill="none" stroke="#4f5360" stroke-width="2.800"/>
<path d="M1086 275.600L1094.800 266.800M1088.800 266.300H1095.300V272.800" fill="none" stroke="#4f5360" stroke-width="2.300"/>
<path d="M1142.20 275.32A13 13 0 0 0 1134.17 264.85" fill="none" stroke="#4f5360" stroke-width="3.5" stroke-linecap="round"/><polygon points="1128.08,262.95 1136.09,261.64 1133.30,268.51" fill="#4f5360" stroke="#4f5360" stroke-width="0.6" stroke-linejoin="round"/><path d="M1120.60 267.24A13 13 0 0 0 1117.01 281.13" fill="none" stroke="#4f5360" stroke-width="3.5" stroke-linecap="round"/><polygon points="1119.23,286.63 1113.33,281.78 1120.34,279.39" fill="#4f5360" stroke="#4f5360" stroke-width="0.6" stroke-linejoin="round"/><path d="M1125.94 289.46A13 13 0 0 0 1138.00 286.56" fill="none" stroke="#4f5360" stroke-width="3.5" stroke-linecap="round"/><polygon points="1142.28,282.14 1140.03,289.69 1135.09,284.18" fill="#4f5360" stroke="#4f5360" stroke-width="0.6" stroke-linejoin="round"/>
<polygon points="1157.100,292.600 1188.900,292.600 1182.400,280 1163.500,280" fill="#04a3cf"/>
<path d="M1172.900 264.500L1165.700 278.700H1180.100Z" fill="none" stroke="#4f5360" stroke-width="2.700" stroke-linejoin="miter"/>
<path d="M1214.400 269.500V291.300H1203.400Z" fill="none" stroke="#4f5360" stroke-width="2.500"/>
<polygon points="1218.100,264.600 1232.700,292.600 1218.100,292.600" fill="#04a3cf"/>
<!-- row icons -->
<path d="M864.300 340.300C866.300 337.300 869 336.400 871.600 336.400C874.200 336.400 876.900 337.300 878.900 340.300C876.900 343.300 874.200 344.200 871.600 344.200C869 344.200 866.300 343.300 864.300 340.300Z" fill="none" stroke="#04a3cf" stroke-width="1.300"/><circle cx="871.600" cy="340.300" r="3" fill="none" stroke="#04a3cf" stroke-width="1.100"/><circle cx="871.600" cy="340.300" r="1.500" fill="#04a3cf"/>
</svg>
<div class="abs" style="left:843px;top:302px;width:432px;height:25px;background:#04a3cf;"></div>
<span class="t" style="left:858.6px;top:307px;letter-spacing:0.060px;font-family:'Liberation Sans',sans-serif;font-size:12px;font-weight:bold;color:#fff;">Группа деталей 4</span>
<div class="abs" style="left:843px;top:327px;width:432px;height:26px;background:#fefee6;"></div>
<span class="t" style="left:892.4px;top:334px;letter-spacing:-0.375px;font-family:'Liberation Sans',sans-serif;font-size:11px;color:#14141e;">Down</span>
<div class="abs" style="left:1102px;top:331px;width:74px;height:19px;background:#edf4f8;"></div>
<div class="abs" style="left:1176px;top:331px;width:16px;height:19px;background:#eeeeee;"></div>
<svg style="left:1181px;top:339px" width="6" height="3" viewBox="0 0 6 3"><path d="M0 0h6L3 3z" fill="#111"/></svg>
<span class="t" style="left:1106px;top:334px;font-family:'Liberation Sans',sans-serif;font-size:11px;color:#14141e;">1</span>
<svg style="left:0;top:0" width="1280" height="360" viewBox="0 0 1280 360">
<path d="M864.300 340.300C866.300 337.300 869 336.400 871.600 336.400C874.200 336.400 876.900 337.300 878.900 340.300C876.900 343.300 874.200 344.200 871.600 344.200C869 344.200 866.300 343.300 864.300 340.300Z" fill="none" stroke="#04a3cf" stroke-width="1.300"/><circle cx="871.600" cy="340.300" r="3" fill="none" stroke="#04a3cf" stroke-width="1.100"/><circle cx="871.600" cy="340.300" r="1.500" fill="#04a3cf"/>
<path d="M1218.92 335.43L1218.21 333.27A6.7 6.7 0 0 0 1215.19 333.27L1214.48 335.43A4.9 4.9 0 0 0 1214.03 335.69L1211.80 335.23A6.7 6.7 0 0 0 1210.29 337.84L1211.81 339.54A4.9 4.9 0 0 0 1211.81 340.06L1210.29 341.76A6.7 6.7 0 0 0 1211.80 344.37L1214.03 343.91A4.9 4.9 0 0 0 1214.48 344.17L1215.19 346.33A6.7 6.7 0 0 0 1218.21 346.33L1218.92 344.17A4.9 4.9 0 0 0 1219.37 343.91L1221.60 344.37A6.7 6.7 0 0 0 1223.11 341.76L1221.59 340.06A4.9 4.9 0 0 0 1221.59 339.54L1223.11 337.84A6.7 6.7 0 0 0 1221.60 335.23L1219.37 335.69A4.9 4.9 0 0 0 1218.92 335.43Z" fill="none" stroke="#3c3f4a" stroke-width="1.300" stroke-linejoin="round"/><circle cx="1216.700" cy="339.800" r="1" fill="#3c3f4a"/>
<g fill="#4f5360"><rect x="1249.200" y="334.600" width="14" height="2.200" rx=".5"/><path d="M1253 334.800V333.400A.9 .9 0 0 1 1253.900 332.500H1258.500A.9 .9 0 0 1 1259.400 333.400V334.800" fill="none" stroke="#4f5360" stroke-width="1.500"/><path d="M1250.600 337.800H1261.800V346.300A1.300 1.300 0 0 1 1260.500 347.600H1251.900A1.300 1.300 0 0 1 1250.600 346.300Z"/></g>
<path d="M1254.300 340V345.500M1258.100 340V345.500" stroke="#fefee6" stroke-width="1.700"/>
</svg>


<!-- LOG -->

<div class="abs" style="left:0;top:932px;width:1280px;height:70px;background:#646464;"></div>
<div class="abs" style="left:1px;top:933px;width:1278px;height:68px;background:#fff;"></div>
<div class="abs" style="left:1px;top:958px;width:102px;height:43px;background:#04a3cf;"></div>
<div class="abs" style="left:103px;top:974px;width:1160px;height:16px;background:#ecf4f8;"></div>
<div class="abs" style="left:1263px;top:958px;width:16px;height:43px;background:#eeeeee;"></div>
<svg style="left:0;top:0" width="1280" height="1024" viewBox="0 0 1280 1024">
<circle cx="90" cy="945.9" r="5.5" fill="#fff" stroke="#16161c" stroke-width="1.3"/><circle cx="182.8" cy="945.9" r="5.5" fill="#fff" stroke="#16161c" stroke-width="1.3"/><circle cx="182.8" cy="945.9" r="3.9" fill="#04a3cf"/><circle cx="246.8" cy="945.9" r="5.5" fill="#fff" stroke="#16161c" stroke-width="1.3"/><circle cx="246.8" cy="945.9" r="3.9" fill="#04a3cf"/><circle cx="332.8" cy="945.9" r="5.5" fill="#fff" stroke="#16161c" stroke-width="1.3"/><circle cx="332.8" cy="945.9" r="3.9" fill="#04a3cf"/><circle cx="400.8" cy="945.9" r="5.5" fill="#fff" stroke="#16161c" stroke-width="1.3"/><circle cx="463" cy="945.9" r="5.5" fill="#fff" stroke="#16161c" stroke-width="1.3"/><circle cx="463" cy="945.9" r="3.9" fill="#04a3cf"/>
<path d="M1267.5 969L1271 965.500L1274.500 969Z" fill="#222"/><path d="M1267.500 990.500H1274.500L1271 994Z" fill="#222"/>
<g fill="#4f5360"><rect x="550.200" y="940.300" width="14" height="2.200" rx=".5"/><path d="M554 940.500V939.100A.9 .9 0 0 1 554.900 938.200H559.500A.9 .9 0 0 1 560.400 939.100V940.500" fill="none" stroke="#4f5360" stroke-width="1.500"/><path d="M551.600 943.500H562.800V952A1.300 1.300 0 0 1 561.500 953.300H552.900A1.300 1.300 0 0 1 551.600 952Z"/></g>
<path d="M555.300 945.700V951.200M559.100 945.700V951.200" stroke="#fff" stroke-width="1.700"/>
<path d="M689.500 939H687.600A1 1 0 0 0 686.600 940V941M693 950.600H695.600A1 1 0 0 0 696.600 949.600V942C694.800 942 693.600 940.800 693.600 939H689.500" fill="none" stroke="#04a3cf" stroke-width="1.400"/>
<path d="M688.500 942.200H683.200A1 1 0 0 0 682.200 943.200V951.700A1 1 0 0 0 683.200 952.700H690.600A1 1 0 0 0 691.600 951.700V945.400C689.800 945.400 688.500 944.200 688.500 942.200Z" fill="#fff" stroke="#4f5360" stroke-width="1.500" stroke-linejoin="round"/><path d="M689.300 941.600L692.200 944.500H690A.7 .7 0 0 1 689.300 943.800z" fill="#4f5360"/>
</svg>
<span class="t" style="left:7px;top:938px;letter-spacing:-0.174px;font-family:'Liberation Sans',sans-serif;font-size:11px;color:#14141e;">Show in Log:</span>
<span class="t" style="left:103.8px;top:938px;letter-spacing:-0.721px;font-family:'Liberation Sans',sans-serif;font-size:11px;color:#14141e;">Commands</span>
<span class="t" style="left:197.6px;top:938px;letter-spacing:-0.590px;font-family:'Liberation Sans',sans-serif;font-size:11px;color:#14141e;">Infos</span>
<span class="t" style="left:261.3px;top:938px;letter-spacing:-0.323px;font-family:'Liberation Sans',sans-serif;font-size:11px;color:#14141e;">Warnings</span>
<span class="t" style="left:347.3px;top:938px;letter-spacing:-0.831px;font-family:'Liberation Sans',sans-serif;font-size:11px;color:#14141e;">Errors</span>
<span class="t" style="left:415.3px;top:938px;letter-spacing:-1.012px;font-family:'Liberation Sans',sans-serif;font-size:11px;color:#14141e;">ACK</span>
<span class="t" style="left:477px;top:938px;letter-spacing:-0.300px;font-family:'Liberation Sans',sans-serif;font-size:11px;color:#14141e;">Auto Scroll</span>
<span class="t" style="left:572.9px;top:938px;letter-spacing:-0.463px;font-family:'Liberation Sans',sans-serif;font-size:11px;color:#14141e;">Clear Log</span>
<span class="t" style="left:704.8px;top:938px;letter-spacing:-0.729px;font-family:'Liberation Sans',sans-serif;font-size:11px;color:#14141e;">Copy</span>
<span class="t" style="left:6.3px;top:960px;font-family:'Liberation Mono',monospace;font-size:12.33px;color:#fff;">22:45:47.594</span>
<span class="t" style="left:6.3px;top:976px;font-family:'Liberation Mono',monospace;font-size:12.33px;color:#fff;">22:45:47.595</span>
<span class="t" style="left:109px;top:960px;font-family:'Liberation Mono',monospace;font-size:12.33px;color:#10108c;">Объект не замкнут</span>
<span class="t" style="left:109px;top:976px;font-family:'Liberation Mono',monospace;font-size:12.33px;color:#10108c;">Анализ завершен.</span>


<!-- STATUS -->

<div class="abs" style="left:0;top:1002px;width:1280px;height:20px;background:#fff;"></div>
<div class="abs" style="left:0;top:1004px;width:1264px;height:1px;background:#ececec;"></div>
<div class="abs" style="left:1264px;top:1003px;width:16px;height:19px;background:#f0eded;"></div>
<span class="t" style="left:4.8px;top:1007px;letter-spacing:0.050px;font-family:'Liberation Sans',sans-serif;font-size:12px;color:#14141e;">Отключен: default</span>
<span class="t" style="left:557px;top:1007px;font-family:'Liberation Sans',sans-serif;font-size:12px;color:#14141e;">-</span>
<span class="t" style="left:1014.4px;top:1007px;letter-spacing:-0.129px;font-family:'Liberation Sans',sans-serif;font-size:12px;color:#14141e;">Готов</span>
<div class="abs" style="left:1050px;top:1005px;width:214px;height:15px;box-sizing:border-box;border:1px solid #b2b2b2;border-radius:2px;background:linear-gradient(180deg,#fdfdfd 0,#e9e9e9 20%,#dadada 50%,#cbcbcb 51%,#c6c6c6 100%);"></div>
<div class="abs" style="left:0;top:1022px;width:1280px;height:1px;background:#5f7da3;"></div><div class="abs" style="left:0;top:1023px;width:1280px;height:1px;background:#c6d9ee;"></div><div class="abs" style="left:262px;top:1022px;width:58px;height:2px;box-sizing:border-box;border:1px solid #111;border-bottom:none;border-radius:2px 2px 0 0;background:#fff;"></div><div class="abs" style="left:447px;top:1022px;width:61px;height:2px;box-sizing:border-box;border:1px solid #111;border-bottom:none;border-radius:2px 2px 0 0;background:#fff;"></div><div class="abs" style="left:510px;top:1022px;width:59px;height:2px;box-sizing:border-box;border:1px solid #111;border-bottom:none;border-radius:2px 2px 0 0;background:#fff;"></div><div class="abs" style="left:571px;top:1022px;width:61px;height:2px;box-sizing:border-box;border:1px solid #111;border-bottom:none;border-radius:2px 2px 0 0;background:#fff;"></div>

</body>
</html>
